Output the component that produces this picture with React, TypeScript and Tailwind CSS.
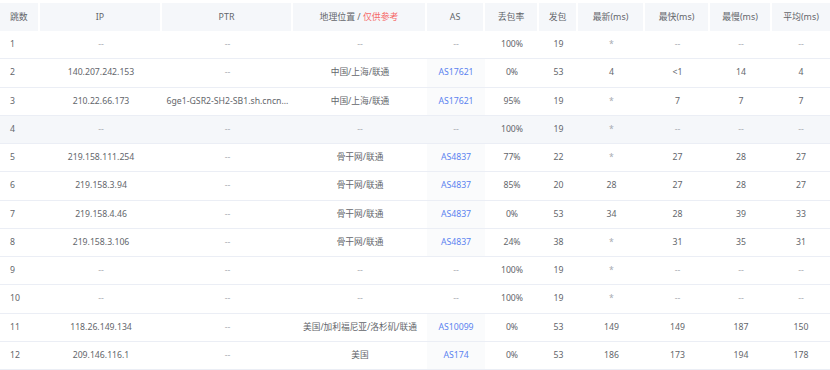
import React from 'react';

interface Hop {
    hop: number;
    ip: string;
    ptr: string;
    geo: string;
    as: string;
    loss: string;
    sent: number;
    last: string;
    best: string;
    worst: string;
    avg: string;
}

const hops: Hop[] = [
    { hop: 1, ip: '--', ptr: '--', geo: '--', as: '--', loss: '100%', sent: 19, last: '*', best: '--', worst: '--', avg: '--' },
    { hop: 2, ip: '140.207.242.153', ptr: '--', geo: '中国/上海/联通', as: 'AS17621', loss: '0%', sent: 53, last: '4', best: '<1', worst: '14', avg: '4' },
    { hop: 3, ip: '210.22.66.173', ptr: '6ge1-GSR2-SH2-SB1.sh.cncn...', geo: '中国/上海/联通', as: 'AS17621', loss: '95%', sent: 19, last: '*', best: '7', worst: '7', avg: '7' },
    { hop: 4, ip: '--', ptr: '--', geo: '--', as: '--', loss: '100%', sent: 19, last: '*', best: '--', worst: '--', avg: '--' },
    { hop: 5, ip: '219.158.111.254', ptr: '--', geo: '骨干网/联通', as: 'AS4837', loss: '77%', sent: 22, last: '*', best: '27', worst: '28', avg: '27' },
    { hop: 6, ip: '219.158.3.94', ptr: '--', geo: '骨干网/联通', as: 'AS4837', loss: '85%', sent: 20, last: '28', best: '27', worst: '28', avg: '27' },
    { hop: 7, ip: '219.158.4.46', ptr: '--', geo: '骨干网/联通', as: 'AS4837', loss: '0%', sent: 53, last: '34', best: '28', worst: '39', avg: '33' },
    { hop: 8, ip: '219.158.3.106', ptr: '--', geo: '骨干网/联通', as: 'AS4837', loss: '24%', sent: 38, last: '*', best: '31', worst: '35', avg: '31' },
    { hop: 9, ip: '--', ptr: '--', geo: '--', as: '--', loss: '100%', sent: 19, last: '*', best: '--', worst: '--', avg: '--' },
    { hop: 10, ip: '--', ptr: '--', geo: '--', as: '--', loss: '100%', sent: 19, last: '*', best: '--', worst: '--', avg: '--' },
    { hop: 11, ip: '118.26.149.134', ptr: '--', geo: '美国/加利福尼亚/洛杉矶/联通', as: 'AS10099', loss: '0%', sent: 53, last: '149', best: '149', worst: '187', avg: '150' },
    { hop: 12, ip: '209.146.116.1', ptr: '--', geo: '美国', as: 'AS174', loss: '0%', sent: 53, last: '186', best: '173', worst: '194', avg: '178' },
];

const cols = 'grid grid-cols-[40px_122px_131px_134px_58px_54px_39px_67px_65px_62px_58px]';

const Cell: React.FC<{ v: string; className?: string }> = ({ v, className = '' }) => (
    <div className={`flex items-center justify-center whitespace-nowrap ${v === '--' || v === '*' ? 'text-[#a8abb2]' : ''} ${className}`}>
        {v}
    </div>
);

const App: React.FC = () => {
    const headers = ['IP', 'PTR', 'GEO', 'AS', '丢包率', '发包', '最新(ms)', '最快(ms)', '最慢(ms)', '平均(ms)'];

    return (
        <div
            className="w-[830px] h-[370px] overflow-hidden bg-white pt-[3px] text-[8.7px] text-[#63666b]"
            style={{ fontFamily: '"Noto Sans", "Noto Sans CJK SC", sans-serif' }}
        >
            <div className={`${cols} h-[28px] bg-[#f5f7fa] text-[8.9px]`}>
                <div className="flex items-center pl-[10px] border-r-2 border-white">跳数</div>
                {headers.map((h, i) => (
                    <div
                        key={h}
                        className={`flex items-center justify-center ${i < headers.length - 1 ? 'border-r-2 border-white' : ''}`}
                    >
                        {h === 'GEO' ? (
                            <span>
                                地理位置 / <span className="text-[#f56c6c]">仅供参考</span>
                            </span>
                        ) : (
                            h
                        )}
                    </div>
                ))}
            </div>

            {hops.map((r) => (
                <div
                    key={r.hop}
                    className={`${cols} h-[28.25px] border-b border-[#ebeef5] ${r.hop === 4 ? 'bg-[#f5f7fa]' : ''}`}
                >
                    <div className="flex items-center pl-[10px]">{r.hop}</div>
                    <Cell v={r.ip} />
                    <Cell v={r.ptr} />
                    <Cell v={r.geo} />
                    {r.as === '--' ? (
                        <Cell v="--" />
                    ) : (
                        <div className="flex items-center justify-center bg-[#fafbfc] text-[#5b83f0]">{r.as}</div>
                    )}
                    <Cell v={r.loss} />
                    <Cell v={String(r.sent)} />
                    <Cell v={r.last} />
                    <Cell v={r.best} />
                    <Cell v={r.worst} />
                    <Cell v={r.avg} />
                </div>
            ))}
        </div>
    );
};

export default App;
